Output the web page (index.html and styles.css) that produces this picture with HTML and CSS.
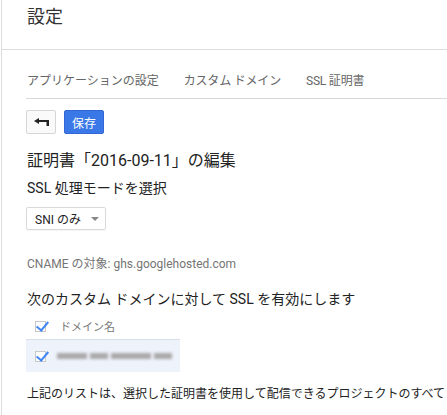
FILE: index.html
```html
<!DOCTYPE html>
<html lang="ja">
<head>
<meta charset="utf-8">
<link rel="stylesheet" href="styles.css">
</head>
<body>
<div class="page">
  <header class="topbar"><h1 class="title">設定</h1></header>
  <main class="content">
    <nav class="tabs">
      <span class="tab">アプリケーションの設定</span>
      <span class="tab">カスタム ドメイン</span>
      <span class="tab">SSL 証明書</span>
    </nav>
    <div class="actions">
      <button class="btn btn-back" aria-label="戻る">
        <svg width="15" height="8" viewBox="0 0 15 8"><path d="M0 3 L5 0 L5 6 Z" fill="#222"/><rect x="4" y="2" width="11" height="2" fill="#222"/><rect x="12.5" y="2" width="2.5" height="6" fill="#222"/></svg>
      </button>
      <button class="btn btn-save">保存</button>
    </div>
    <h2 class="heading">証明書「2016-09-11」の編集</h2>
    <p class="label">SSL 処理モードを選択</p>
    <div class="select"><span>SNI のみ</span><span class="caret"></span></div>
    <p class="cname">CNAME の対象: ghs.googlehosted.com</p>
    <p class="label label-domains">次のカスタム ドメインに対して SSL を有効にします</p>
    <div class="table">
      <div class="thead"><span class="check"></span><span class="colname">ドメイン名</span></div>
      <div class="trow"><span class="check"></span><span class="blur"><i class="b1"></i><i class="b2"></i><i class="b3"></i><i class="b4"></i></span></div>
    </div>
    <p class="note">上記のリストは、選択した証明書を使用して配信できるプロジェクトのすべて</p>
  </main>
</div>
</body>
</html>
```
FILE: styles.css
```css
* { box-sizing: border-box; }
html, body { margin: 0; padding: 0; background: #fff; }
body {
  font-family: Roboto, "Noto Sans CJK JP", sans-serif;
  color: #212121;
  width: 447px;
  height: 415px;
  overflow: hidden;
}
.page {
  margin-left: 1px;
  border-left: 1px solid #dcdcdc;
  min-height: 415px;
}
.topbar {
  height: 50px;
  border-bottom: 1px solid #dcdcdc;
  padding: 6px 0 0 25px;
}
.title {
  margin: 0;
  font-size: 18px;
  font-weight: 400;
  line-height: 22px;
  color: #333;
}
.content { padding-left: 24px; }
.tabs {
  display: flex;
  gap: 24px;
  margin-top: 24px;
  padding-bottom: 10px;
  border-bottom: 1px solid #d8d8d8;
  white-space: nowrap;
}
.tab {
  font-size: 12px;
  line-height: 14px;
  color: #666;
  padding-left: 1px;
}
.tab + .tab { letter-spacing: -0.2px; }
.actions {
  display: flex;
  gap: 8px;
  margin-top: 11px;
}
.btn {
  height: 24px;
  border-radius: 2px;
  font-family: inherit;
  padding: 0;
  display: flex;
  align-items: center;
  justify-content: center;
  cursor: pointer;
}
.btn-back {
  width: 30px;
  background: #fafafa;
  border: 1px solid #d6d6d6;
}
.btn-save {
  width: 40px;
  background: #3b78e7;
  border: 1px solid #3367d6;
  color: #fff;
  font-size: 12px;
}
.heading {
  margin: 17px 0 0 1px;
  font-size: 16px;
  font-weight: 400;
  line-height: 20px;
  color: #222;
}
.label {
  margin: 8px 0 0 1px;
  font-size: 14px;
  line-height: 18px;
  color: #222;
}
.select {
  margin-top: 10px;
  width: 80px;
  height: 23px;
  border: 1px solid #d9d9d9;
  border-radius: 2px;
  display: flex;
  align-items: center;
  padding-left: 8px;
  font-size: 12px;
  color: #222;
  box-shadow: 0 1px 1px rgba(0,0,0,0.04);
}
.caret {
  margin-left: 10px;
  width: 0; height: 0;
  border-left: 4px solid transparent;
  border-right: 4px solid transparent;
  border-top: 4px solid #888;
}
.cname {
  margin: 26px 0 0 1px;
  font-size: 12px;
  line-height: 16px;
  color: #757575;
}
.label-domains { margin-top: 18px; }
.table { margin-top: 8px; width: 154px; }
.thead {
  height: 20px;
  display: flex;
  align-items: center;
  padding-left: 9px;
  margin-bottom: 3px;
}
.colname {
  margin-left: 14px;
  font-size: 11px;
  color: #777;
}
.trow {
  height: 33px;
  display: flex;
  align-items: center;
  padding-left: 9px;
  background: #eef2fa;
  border-top: 1px solid #d9dfe9;
}
.check {
  position: relative;
  width: 11px;
  height: 11px;
  border: 1px solid #c8c8c8;
  background: #fff;
  flex: none;
}
.check::after {
  content: "";
  position: absolute;
  left: 3px;
  top: -3px;
  width: 5px;
  height: 10px;
  border-right: 2px solid #4285f4;
  border-bottom: 2px solid #4285f4;
  transform: rotate(40deg);
}
.blur {
  margin-left: 11px;
  display: flex;
  gap: 3px;
  align-items: center;
  filter: blur(1.5px);
}
.blur i { display: block; height: 6px; background: #a9a9a9; }
.b1 { width: 30px; }
.b2 { width: 18px; }
.b3 { width: 40px; }
.b4 { width: 18px; }
.note {
  margin: 14px 0 0 1px;
  font-size: 12px;
  line-height: 16px;
  color: #222;
  white-space: nowrap;
}
```
